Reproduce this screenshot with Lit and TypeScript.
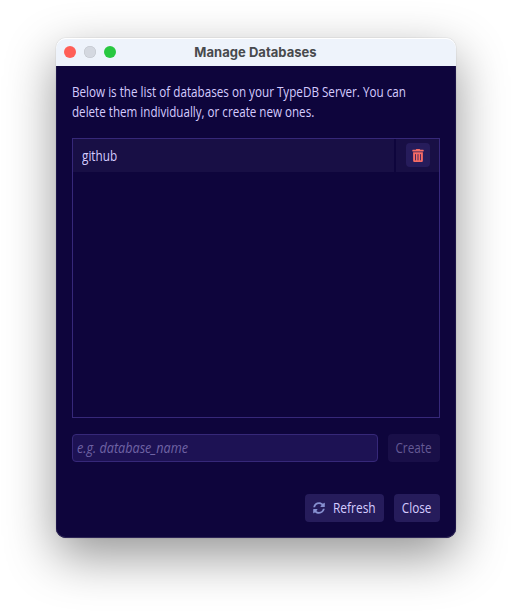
import { LitElement, html, css, svg } from "lit";
import { customElement, state } from "lit/decorators.js";

const trash = svg`<path d="M32 464a48 48 0 0 0 48 48h288a48 48 0 0 0 48-48V128H32zm272-256a16 16 0 0 1 32 0v224a16 16 0 0 1-32 0zm-96 0a16 16 0 0 1 32 0v224a16 16 0 0 1-32 0zm-96 0a16 16 0 0 1 32 0v224a16 16 0 0 1-32 0zM432 32H312l-9.4-18.7A24 24 0 0 0 281.1 0H166.8a23.72 23.72 0 0 0-21.4 13.3L136 32H16A16 16 0 0 0 0 48v32a16 16 0 0 0 16 16h416a16 16 0 0 0 16-16V48a16 16 0 0 0-16-16z"/>`;
const sync = svg`<path d="M370.72 133.28C339.458 104.008 298.888 87.962 255.848 88c-77.458.068-144.328 53.178-162.791 126.85-1.344 5.363-6.122 9.15-11.651 9.15H24.103c-7.498 0-13.194-6.807-11.807-14.176C33.933 94.924 134.813 8 256 8c66.448 0 126.791 26.136 171.315 68.685L463.03 40.97C478.149 25.851 504 36.559 504 57.941V192c0 13.255-10.745 24-24 24H345.941c-21.382 0-32.09-25.851-16.971-40.971l41.75-41.749zM32 296h134.059c21.382 0 32.09 25.851 16.971 40.971l-41.75 41.75c31.262 29.273 71.835 45.319 114.876 45.28 77.418-.07 144.315-53.144 162.787-126.849 1.344-5.363 6.122-9.15 11.651-9.15h57.304c7.498 0 13.194 6.807 11.807 14.176C478.067 417.076 377.187 504 256 504c-66.448 0-126.791-26.136-171.315-68.685L48.97 471.03C33.851 486.149 8 475.441 8 454.059V320c0-13.255 10.745-24 24-24z"/>`;

@customElement("app-root")
export class AppRoot extends LitElement {
  @state() databases = ["github"];

  static styles = css`
    :host {
      display: block;
      box-sizing: border-box;
      height: 612px;
      padding: 38px 56px 0;
      background: #fff;
      overflow: hidden;
      font-family: "Open Sans", "Noto Sans", sans-serif;
      font-size: 14px;
      color: #d5ccff;
    }
    * { box-sizing: border-box; }
    .window {
      display: flex;
      flex-direction: column;
      width: 400px;
      height: 500px;
      border-radius: 10px;
      box-shadow: 0 0 1px rgba(0, 0, 0, 0.4), 0 18px 50px rgba(0, 0, 0, 0.42);
    }
    .titlebar {
      display: grid;
      grid-template-columns: 64px 1fr 65px;
      align-items: center;
      height: 28px;
      padding-bottom: 1px;
      border-radius: 10px 10px 0 0;
      background: #eef3fb;
      box-shadow: inset 0 1px #fff;
      color: #484a4d;
      font: 700 13px/16px Inter, sans-serif;
      letter-spacing: 0.03px;
      text-align: center;
    }
    .lights { display: flex; gap: 8px; padding-left: 8px; }
    .light { width: 12px; height: 12px; border-radius: 50%; }
    .red { background: #ff5f57; }
    .grey { background: #d4d8e0; box-shadow: inset 0 0 0 0.5px #bfc3ca; }
    .green { background: #28c840; }
    .content {
      flex: 1;
      display: flex;
      flex-direction: column;
      padding: 16px;
      border-radius: 0 0 10px 10px;
      background: #0e053c;
      box-shadow: inset 0 -1px #2e2656, inset 1px 0 #1d1549, inset -1px 0 #1d1549;
    }
    .intro { height: 40px; line-height: 20px; white-space: nowrap; }
    .line { display: block; transform-origin: 0 50%; }
    .l1 { transform: scaleX(0.834); }
    .l2 { transform: scaleX(0.83); }
    .list { height: 280px; margin-top: 16px; border: 1px solid #362879; }
    .row { display: grid; grid-template-columns: 1fr 43px; gap: 2.5px; height: 33px; }
    .cell { display: flex; align-items: center; padding-bottom: 1px; background: #180f45; }
    .name { padding-left: 9px; }
    .action { justify-content: center; }
    .icon { display: block; flex: none; fill: currentColor; }
    .delete, .btn, .field { font: inherit; border: 0; border-radius: 4px; padding: 0; }
    .delete {
      display: grid;
      place-items: center;
      width: 24px;
      height: 24px;
      background: #261c5b;
      color: #f66b65;
    }
    .create { display: flex; gap: 10px; margin-top: 16px; height: 28px; }
    .field {
      flex: 1;
      display: flex;
      align-items: center;
      padding: 0 0 1px 4px;
      background: #1d1254;
      border: 1px solid #362879;
      color: #6f63a4;
      font-style: italic;
    }
    .btn {
      display: flex;
      align-items: center;
      justify-content: center;
      height: 28px;
      padding-bottom: 1px;
      background: #261c5b;
      color: #d5ccff;
    }
    .disabled { width: 52px; background: #190f48; color: #655a95; }
    .footer { display: flex; justify-content: flex-end; gap: 10px; margin-top: 32px; }
    .refresh { width: 79px; justify-content: flex-start; padding-left: 8px; gap: 8px; }
    .refresh .icon { color: #8790d0; }
    .close { width: 46px; }
    .t { display: block; transform: scaleX(0.839); white-space: nowrap; }
    .left { transform-origin: 0 50%; }
    .hint { transform: scaleX(0.902); }
    .refresh .t { transform: scaleX(0.853); }
  `;

  render() {
    return html`
      <div class="window">
        <div class="titlebar">
          <div class="lights">
            <span class="light red"></span><span class="light grey"></span><span class="light green"></span>
          </div>
          <span>Manage Databases</span>
        </div>
        <div class="content">
          <div class="intro">
            <span class="line l1">Below is the list of databases on your TypeDB Server. You can</span>
            <span class="line l2">delete them individually, or create new ones.</span>
          </div>
          <div class="list">
            ${this.databases.map(
              (name) => html`<div class="row">
                <div class="cell name"><span class="t left">${name}</span></div>
                <div class="cell action">
                  <button class="delete" aria-label="Delete">
                    <svg class="icon" width="12" height="13" viewBox="0 0 448 512">${trash}</svg>
                  </button>
                </div>
              </div>`
            )}
          </div>
          <div class="create">
            <div class="field"><span class="t left hint">e.g. database_name</span></div>
            <button class="btn disabled"><span class="t">Create</span></button>
          </div>
          <div class="footer">
            <button class="btn refresh">
              <svg class="icon" width="12" height="12" viewBox="0 0 512 512">${sync}</svg>
              <span class="t left">Refresh</span>
            </button>
            <button class="btn close"><span class="t">Close</span></button>
          </div>
        </div>
      </div>
    `;
  }
}
